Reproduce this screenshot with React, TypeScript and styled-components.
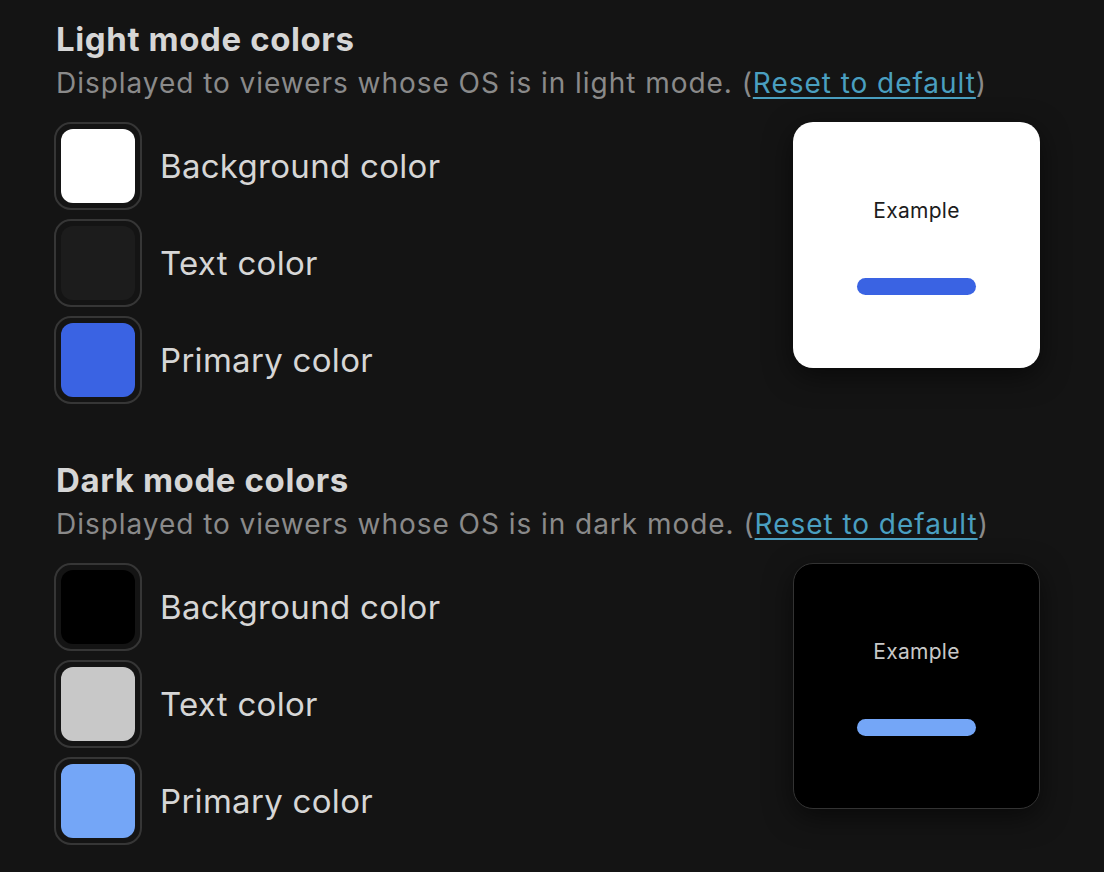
import React from 'react'
import styled, { createGlobalStyle } from 'styled-components'

type Scheme = {
  title: string
  mode: string
  background: string
  text: string
  primary: string
  dark: boolean
}

const schemes: Scheme[] = [
  { title: 'Light mode colors', mode: 'light', background: '#ffffff', text: '#1c1c1c', primary: '#3a63e3', dark: false },
  { title: 'Dark mode colors', mode: 'dark', background: '#000000', text: '#c8c8c8', primary: '#74a6f7', dark: true },
]

const App: React.FC = () => (
  <>
    <GlobalStyle />
    <Page>
      {schemes.map((s) => (
        <Section key={s.mode}>
          <Heading>{s.title}</Heading>
          <Hint>
            Displayed to viewers whose OS is in {s.mode} mode. (<ResetLink href="#">Reset to default</ResetLink>)
          </Hint>
          <Body>
            <SwatchList>
              <SwatchRow>
                <Swatch>
                  <SwatchFill $color={s.background} />
                </Swatch>
                <SwatchLabel>Background color</SwatchLabel>
              </SwatchRow>
              <SwatchRow>
                <Swatch>
                  <SwatchFill $color={s.text} />
                </Swatch>
                <SwatchLabel>Text color</SwatchLabel>
              </SwatchRow>
              <SwatchRow>
                <Swatch>
                  <SwatchFill $color={s.primary} />
                </Swatch>
                <SwatchLabel>Primary color</SwatchLabel>
              </SwatchRow>
            </SwatchList>
            <Preview $bg={s.background} $bordered={s.dark}>
              <PreviewText $color={s.text}>Example</PreviewText>
              <PreviewBar $color={s.primary} />
            </Preview>
          </Body>
        </Section>
      ))}
    </Page>
  </>
)
export default App

const GlobalStyle = createGlobalStyle`
  html, body {
    margin: 0;
    background: #141414;
  }
  body {
    font-family: Inter, "Noto Sans", sans-serif;
    -webkit-font-smoothing: antialiased;
  }
`
const Page = styled.div`
  width: 1104px;
  height: 872px;
  box-sizing: border-box;
  padding: 19px 0 0 54px;
  overflow: hidden;
  display: flex;
  flex-direction: column;
  gap: 56px;
`
const Section = styled.section`
  width: 986px;
  display: flex;
  flex-direction: column;
`
const Heading = styled.h2`
  margin: 0 0 0 2px;
  font-size: 33px;
  line-height: 40px;
  font-weight: 700;
  color: #d6d6d6;
  letter-spacing: 0.6px;
`
const Hint = styled.p`
  margin: 6px 0 0 2px;
  font-size: 28px;
  line-height: 36px;
  color: #8a8a8a;
  letter-spacing: 0.96px;
  white-space: nowrap;
`
const ResetLink = styled.a`
  color: #4a9fc0;
  text-decoration: underline;
  text-underline-offset: 4px;
  text-decoration-thickness: 2px;
`
const Body = styled.div`
  margin-top: 21px;
  display: flex;
  justify-content: space-between;
  align-items: flex-start;
`
const SwatchList = styled.div`
  display: flex;
  flex-direction: column;
  gap: 9px;
`
const SwatchRow = styled.div`
  display: flex;
  align-items: center;
  gap: 18px;
`
const Swatch = styled.div`
  width: 88px;
  height: 88px;
  box-sizing: border-box;
  padding: 5px;
  border: 2px solid #363636;
  border-radius: 17px;
`
const SwatchFill = styled.div<{ $color: string }>`
  width: 100%;
  height: 100%;
  border-radius: 12px;
  background: ${(p) => p.$color};
`
const SwatchLabel = styled.span`
  font-size: 33px;
  color: #d6d6d6;
  letter-spacing: 0.3px;
`
const Preview = styled.div<{ $bg: string; $bordered: boolean }>`
  width: 247px;
  height: 246px;
  box-sizing: border-box;
  border-radius: 20px;
  background: ${(p) => p.$bg};
  border: ${(p) => (p.$bordered ? '1px solid #333' : 'none')};
  box-shadow: 0 8px 28px rgba(0, 0, 0, 0.55);
  display: flex;
  flex-direction: column;
  align-items: center;
  justify-content: center;
  gap: 54px;
  padding-top: 2px;
`
const PreviewText = styled.div<{ $color: string }>`
  font-size: 21px;
  line-height: 26px;
  color: ${(p) => p.$color};
  letter-spacing: 0.3px;
`
const PreviewBar = styled.div<{ $color: string }>`
  width: 119px;
  height: 17px;
  border-radius: 9px;
  background: ${(p) => p.$color};
`
